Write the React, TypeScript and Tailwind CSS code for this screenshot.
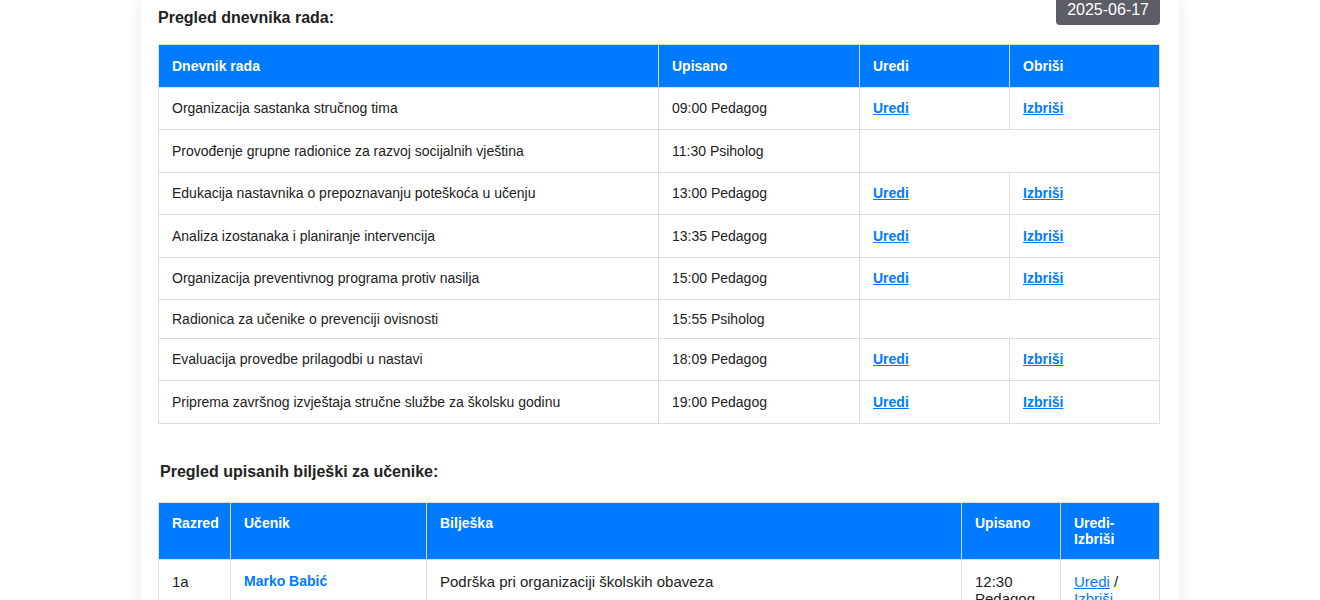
import React from "react";

type Entry = {
  title: string;
  time: string;
  editable: boolean;
  h: string;
};

const entries: Entry[] = [
  { title: "Organizacija sastanka stručnog tima", time: "09:00 Pedagog", editable: true, h: "h-[42px]" },
  { title: "Provođenje grupne radionice za razvoj socijalnih vještina", time: "11:30 Psiholog", editable: false, h: "h-[43px]" },
  { title: "Edukacija nastavnika o prepoznavanju poteškoća u učenju", time: "13:00 Pedagog", editable: true, h: "h-[42px]" },
  { title: "Analiza izostanaka i planiranje intervencija", time: "13:35 Pedagog", editable: true, h: "h-[43px]" },
  { title: "Organizacija preventivnog programa protiv nasilja", time: "15:00 Pedagog", editable: true, h: "h-[42px]" },
  { title: "Radionica za učenike o prevenciji ovisnosti", time: "15:55 Psiholog", editable: false, h: "h-[39px]" },
  { title: "Evaluacija provedbe prilagodbi u nastavi", time: "18:09 Pedagog", editable: true, h: "h-[42px]" },
  { title: "Priprema završnog izvještaja stručne službe za školsku godinu", time: "19:00 Pedagog", editable: true, h: "h-[43px]" },
];

const th = "border border-[#dddddd] bg-[#007bff] px-[13px] text-left text-[14px] font-bold text-white";
const td = "border border-[#dddddd] px-[13px] text-[14px]";
const td2 = "border border-[#dddddd] px-[13px] pb-3 pt-[13px] align-top text-[15px] leading-[17px]";

const App = () => {
  return (
    <div className="min-h-screen bg-white font-['Liberation_Sans',Arial,sans-serif] text-[#222222]">
      <div className="mx-auto w-[1038px] bg-white pb-10 pl-[17px] pr-[19px] shadow-[0_0_14px_rgba(0,0,0,0.09)]">
        <div className="flex items-start justify-between">
          <h2 className="mt-[8px] text-[16px] font-bold leading-[20px]">Pregled dnevnika rada:</h2>
          <span className="-mt-[8px] rounded bg-[#5d5d66] px-[11px] pb-[5px] pt-[8px] text-[16px] leading-[20px] text-white">
            2025-06-17
          </span>
        </div>

        <table className="mt-[16px] w-full table-fixed border-collapse">
          <colgroup>
            <col className="w-[500px]" />
            <col className="w-[201px]" />
            <col className="w-[150px]" />
            <col />
          </colgroup>
          <thead>
            <tr className="h-[43px]">
              <th className={th}>Dnevnik rada</th>
              <th className={th}>Upisano</th>
              <th className={th}>Uredi</th>
              <th className={th}>Obriši</th>
            </tr>
          </thead>
          <tbody>
            {entries.map((e) => (
              <tr key={e.title} className={e.h}>
                <td className={td}>{e.title}</td>
                <td className={td}>{e.time}</td>
                {e.editable ? (
                  <>
                    <td className={td}>
                      <a href="#" className="font-bold text-[#007bff] underline">
                        Uredi
                      </a>
                    </td>
                    <td className={td}>
                      <a href="#" className="font-bold text-[#007bff] underline">
                        Izbriši
                      </a>
                    </td>
                  </>
                ) : (
                  <td className={td} colSpan={2}></td>
                )}
              </tr>
            ))}
          </tbody>
        </table>

        <h2 className="ml-[2px] mt-[38px] text-[16px] font-bold leading-[20px]">
          Pregled upisanih bilješki za učenike:
        </h2>

        <table className="mt-[20px] w-full table-fixed border-collapse">
          <colgroup>
            <col className="w-[72px]" />
            <col className="w-[196px]" />
            <col className="w-[535px]" />
            <col className="w-[99px]" />
            <col />
          </colgroup>
          <thead>
            <tr>
              <th className={`${th} pb-3 pt-[12px] align-top leading-[16px]`}>Razred</th>
              <th className={`${th} pb-3 pt-[12px] align-top leading-[16px]`}>Učenik</th>
              <th className={`${th} pb-3 pt-[12px] align-top leading-[16px]`}>Bilješka</th>
              <th className={`${th} pb-3 pt-[12px] align-top leading-[16px]`}>Upisano</th>
              <th className={`${th} pb-3 pt-[12px] align-top leading-[16px]`}>Uredi-Izbriši</th>
            </tr>
          </thead>
          <tbody>
            <tr>
              <td className={td2}>1a</td>
              <td className="border border-[#dddddd] px-[13px] pb-3 pt-[13px] align-top text-[14px] leading-[17px]">
                <a href="#" className="font-bold text-[#007bff]">
                  Marko Babić
                </a>
              </td>
              <td className={td2}>Podrška pri organizaciji školskih obaveza</td>
              <td className={td2}>12:30 Pedagog</td>
              <td className={td2}>
                <a href="#" className="text-[#007bff] underline">
                  Uredi
                </a>{" "}
                /{" "}
                <a href="#" className="text-[#007bff] underline">
                  Izbriši
                </a>
              </td>
            </tr>
          </tbody>
        </table>
      </div>
    </div>
  );
};

export default App;
